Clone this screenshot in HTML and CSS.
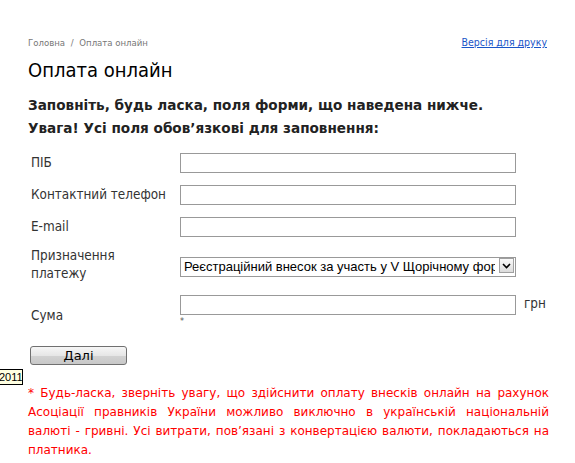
FILE: index.html
```html
<!DOCTYPE html>
<html lang="uk">
<head>
<meta charset="utf-8">
<title>Оплата онлайн</title>
<link rel="stylesheet" href="styles.css">
</head>
<body>
<div class="page">
  <div class="topbar">
    <div class="crumbs">Головна <span class="sep">/</span> Оплата онлайн</div>
    <a class="print" href="#">Версія для друку</a>
  </div>
  <h1 class="title">Оплата онлайн</h1>
  <p class="lead">Заповніть, будь ласка, поля форми, що наведена нижче.<br>Увага! Усі поля обов’язкові для заповнення:</p>
  <form class="form">
    <label class="lbl">ПІБ</label>
    <div class="cell"><input class="field" type="text"></div>
    <div></div>
    <label class="lbl">Контактний телефон</label>
    <div class="cell"><input class="field" type="text"></div>
    <div></div>
    <label class="lbl">E-mail</label>
    <div class="cell"><input class="field" type="text"></div>
    <div></div>
    <label class="lbl lbl-two">Призначення платежу</label>
    <div class="cell">
      <div class="selwrap">
        <select class="sel"><option>Реєстраційний внесок за участь у V Щорічному форумі</option></select>
        <span class="arrow"><svg width="9" height="6" viewBox="0 0 9 6"><path d="M1 1 L4.5 4.5 L8 1" fill="none" stroke="#000" stroke-width="1.6"/></svg></span>
      </div>
    </div>
    <div></div>
    <label class="lbl lbl-sum">Сума</label>
    <div class="cell"><input class="field" type="text"><span class="star">*</span></div>
    <div class="unit">грн</div>
  </form>
  <button class="btn" type="button">Далі</button>
  <p class="note">* Будь-ласка, зверніть увагу, що здійснити оплату внесків онлайн на рахунок Асоціації правників України можливо виключно в українській національній валюті - гривні. Усі витрати, пов’язані з конвертацією валюти, покладаються на платника.</p>
</div>
<div class="tip">2011</div>
</body>
</html>
```

FILE: styles.css
```css
html, body {
  margin: 0;
  padding: 0;
  background: #fff;
}
body {
  font-family: "DejaVu Sans Condensed", "DejaVu Sans", sans-serif;
  color: #333;
  position: relative;
  min-height: 463px;
}
.page {
  width: 521px;
  padding: 36px 0 0 28px;
}
.topbar {
  display: flex;
  justify-content: space-between;
  align-items: baseline;
  height: 16px;
}
.crumbs {
  font-size: 9.5px;
  color: #777;
}
.sep {
  margin: 0 3px;
}
.print {
  font-size: 10.5px;
  color: #1a55c8;
  text-decoration: underline;
  margin-right: 2px;
}
.title {
  margin: 5px 0 0;
  font-size: 20px;
  font-weight: normal;
  color: #000;
  line-height: 26px;
}
.lead {
  margin: 11px 0 0;
  font-family: "DejaVu Sans", Verdana, sans-serif;
  font-size: 13.6px;
  font-weight: bold;
  line-height: 23px;
  color: #222;
}
.form {
  display: grid;
  grid-template-columns: 149px 336px 34px;
  grid-auto-rows: auto;
  row-gap: 12px;
  margin: 13px 0 0 3px;
  align-items: center;
}
.lbl {
  font-size: 13.4px;
  color: #333;
  line-height: 18px;
}
.lbl-two {
  padding-right: 40px;
  margin-top: -2px;
}
.cell {
  display: flex;
  flex-direction: column;
}
.field {
  box-sizing: border-box;
  width: 336px;
  height: 20px;
  border: 1px solid #999;
  margin: 0;
  padding: 0 2px;
  font: 13px "Liberation Sans", Arial, sans-serif;
}
.selwrap {
  position: relative;
  width: 336px;
  height: 20px;
}
.sel {
  appearance: none;
  -webkit-appearance: none;
  box-sizing: border-box;
  width: 336px;
  height: 20px;
  border: 1px solid #999;
  border-radius: 0;
  background: #fff;
  margin: 0;
  padding: 0 20px 0 3px;
  font: 13px "Liberation Sans", Arial, sans-serif;
  color: #000;
}
.arrow {
  position: absolute;
  right: 2px;
  top: 2px;
  width: 15px;
  height: 15px;
  box-sizing: border-box;
  border: 1px solid #a0a0a0;
  background: linear-gradient(#fafafa, #dcdcdc);
  display: flex;
  align-items: center;
  justify-content: center;
}
.star {
  font-size: 9px;
  line-height: 12px;
  color: #555;
}
.lbl-sum {
  padding-top: 9px;
}
.unit {
  align-self: start;
  padding: 1px 0 0 8px;
  font-size: 13.4px;
  color: #333;
}
.btn {
  display: block;
  box-sizing: border-box;
  width: 97px;
  height: 19px;
  margin: 19px 0 0 2px;
  padding: 0;
  border: 1px solid #707070;
  border-radius: 3px;
  background: linear-gradient(#f6f6f6 0%, #e6e6e6 50%, #d2d2d2 51%, #c8c8c8 100%);
  font: 13px "DejaVu Sans", Verdana, sans-serif;
  color: #000;
  line-height: 16px;
}
.note {
  margin: 19px 0 0;
  font-family: "DejaVu Sans", Verdana, sans-serif;
  font-size: 12px;
  line-height: 19px;
  color: #f00;
  text-align: justify;
}
.tip {
  position: absolute;
  left: -4px;
  top: 369px;
  width: 27px;
  height: 16px;
  box-sizing: border-box;
  border: 1px solid #000;
  background: #ffffe1;
  font: 11px "Liberation Sans", Arial, sans-serif;
  color: #000;
  line-height: 14px;
  padding-left: 2px;
}
```
